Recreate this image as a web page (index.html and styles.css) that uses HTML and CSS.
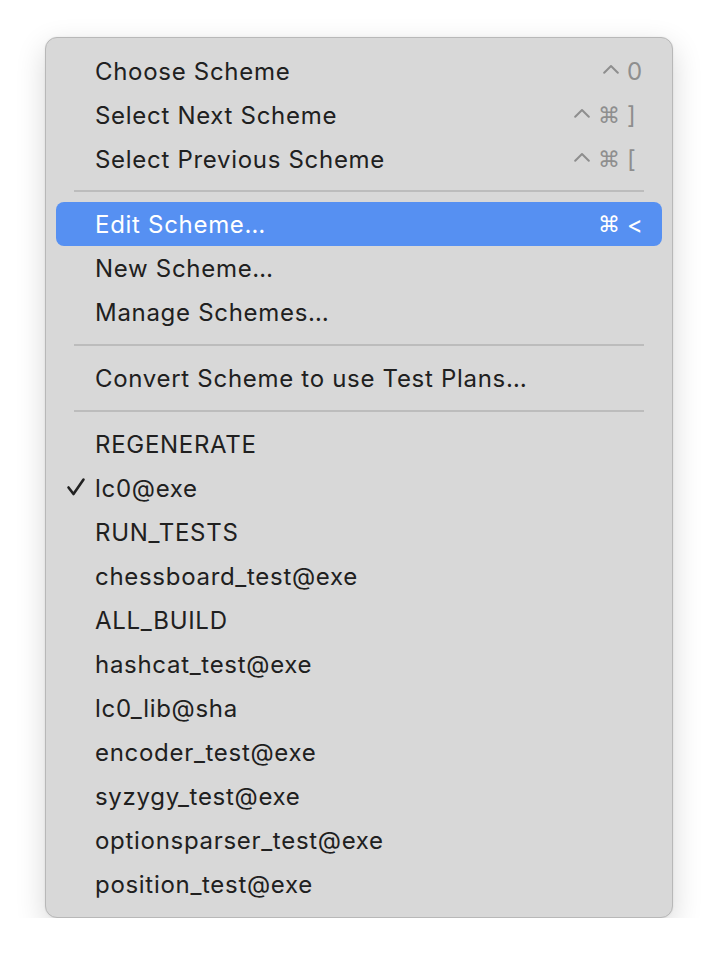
FILE: index.html
```html
<!DOCTYPE html>
<html>
<head>
<meta charset="utf-8">
<link rel="stylesheet" href="styles.css">
</head>
<body>
<div class="menu">
  <div class="item"><span class="label">Choose Scheme</span><span class="keys"><svg class="caret" width="16" height="10" viewBox="0 0 16 10"><path d="M1.2 8.8 L8 2 L14.8 8.8" fill="none" stroke="currentColor" stroke-width="2" stroke-linecap="round" stroke-linejoin="round"/></svg><span class="k key">0</span></span></div>
  <div class="item"><span class="label">Select Next Scheme</span><span class="keys"><svg class="caret" width="16" height="10" viewBox="0 0 16 10"><path d="M1.2 8.8 L8 2 L14.8 8.8" fill="none" stroke="currentColor" stroke-width="2" stroke-linecap="round" stroke-linejoin="round"/></svg><span class="k">⌘</span><span class="k key">]</span></span></div>
  <div class="item"><span class="label">Select Previous Scheme</span><span class="keys"><svg class="caret" width="16" height="10" viewBox="0 0 16 10"><path d="M1.2 8.8 L8 2 L14.8 8.8" fill="none" stroke="currentColor" stroke-width="2" stroke-linecap="round" stroke-linejoin="round"/></svg><span class="k">⌘</span><span class="k key">[</span></span></div>
  <div class="sep first"></div>
  <div class="item active"><span class="label">Edit Scheme…</span><span class="keys"><span class="k">⌘</span><span class="k key">&lt;</span></span></div>
  <div class="item"><span class="label">New Scheme…</span></div>
  <div class="item"><span class="label">Manage Schemes…</span></div>
  <div class="sep"></div>
  <div class="item"><span class="label">Convert Scheme to use Test Plans…</span></div>
  <div class="sep"></div>
  <div class="item"><span class="label">REGENERATE</span></div>
  <div class="item checked"><svg class="check" width="20" height="20" viewBox="0 0 20 20"><path d="M2.5 10.5 L7.5 17 L17.5 2.5" fill="none" stroke="#222" stroke-width="2.6" stroke-linecap="round" stroke-linejoin="round"/></svg><span class="label">lc0@exe</span></div>
  <div class="item"><span class="label">RUN_TESTS</span></div>
  <div class="item"><span class="label">chessboard_test@exe</span></div>
  <div class="item"><span class="label">ALL_BUILD</span></div>
  <div class="item"><span class="label">hashcat_test@exe</span></div>
  <div class="item"><span class="label">lc0_lib@sha</span></div>
  <div class="item"><span class="label">encoder_test@exe</span></div>
  <div class="item"><span class="label">syzygy_test@exe</span></div>
  <div class="item"><span class="label">optionsparser_test@exe</span></div>
  <div class="item"><span class="label">position_test@exe</span></div>
</div>
</body>
</html>
```
FILE: styles.css
```css
html, body {
  margin: 0;
  padding: 0;
  background: #ffffff;
}
body {
  padding: 37px 0 0 45px;
  font-family: "Inter", "DejaVu Sans", sans-serif;
}
.menu {
  box-sizing: border-box;
  width: 628px;
  background: #d8d8d8;
  border: 1px solid #b8b8b8;
  border-radius: 12px;
  padding: 11px 10px 11px 10px;
  box-shadow: 0 10px 30px rgba(0,0,0,0.16), 0 0 2px rgba(0,0,0,0.08);
}
.item {
  position: relative;
  height: 44px;
  display: flex;
  align-items: center;
  padding: 0 18px 0 39px;
  border-radius: 8px;
  font-size: 24px;
  color: #202020;
  letter-spacing: 0.7px;
}
.item .label {
  flex: 1;
  white-space: nowrap;
}
.item.active {
  background: #5690f2;
  color: #ffffff;
}
.keys {
  display: flex;
  align-items: center;
  gap: 7px;
  color: #8e8e8e;
  letter-spacing: 0;
}
.item.active .keys {
  color: #ffffff;
}
.caret {
  display: block;
  margin-top: -5px;
  margin-right: 1px;
}
.k {
  font-family: "DejaVu Sans", sans-serif;
  font-size: 22px;
  display: inline-block;
  text-align: center;
}
.k.key {
  font-family: "Inter", sans-serif;
  font-size: 24px;
  width: 17px;
  text-align: left;
}
.check {
  position: absolute;
  left: 10px;
  top: 11px;
}
.sep {
  height: 2px;
  margin: 10px 18px 10px 18px;
  background: #bcbcbc;
}
.sep.first {
  margin-top: 9px;
}
```
